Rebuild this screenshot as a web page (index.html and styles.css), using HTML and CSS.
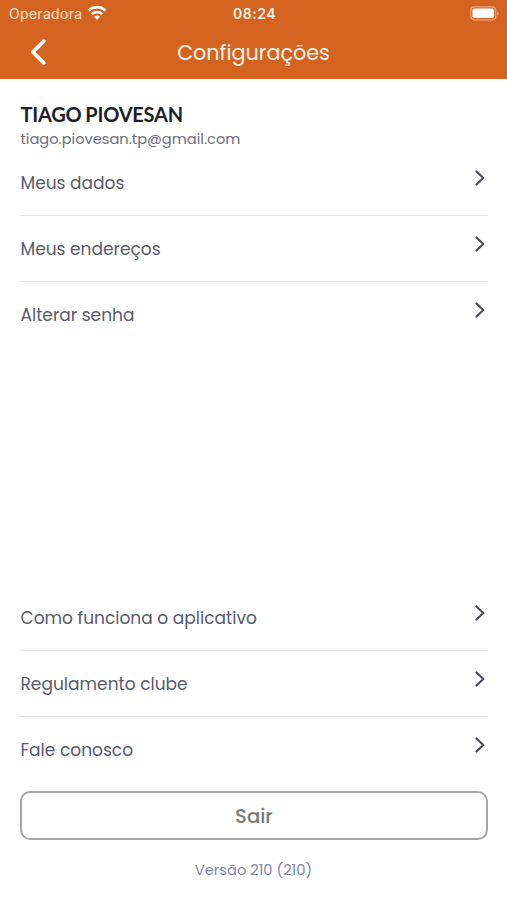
FILE: index.html
```html
<!DOCTYPE html>
<html lang="pt-BR">
<head>
    <meta charset="UTF-8">
    <meta name="viewport" content="width=device-width, initial-scale=1.0">
    <title>Configurações</title>
    <link rel="stylesheet" href="styles.css">
</head>
<body>
    <header class="header">
        <div class="status-bar">
            <div class="carrier">
                <span>Operadora</span>
                <svg class="wifi" width="20" height="15" viewBox="0 0 20 15" fill="none" stroke="#fff" stroke-width="2.6">
                    <path d="M1.6 5.6a12 12 0 0 1 16.8 0"/>
                    <path d="M4.8 9.1a7.4 7.4 0 0 1 10.4 0"/>
                    <path d="M10 14.8L7 11.8a4.2 4.2 0 0 1 6 0z" fill="#fff" stroke="none"/>
                </svg>
            </div>
            <span class="time">08:24</span>
            <svg class="battery" width="30" height="15" viewBox="0 0 30 15">
                <rect x="0.8" y="0.8" width="25" height="13" rx="3.5" fill="none" stroke="#e9a57a" stroke-width="1.2"/>
                <rect x="2.5" y="2.5" width="21.6" height="9.6" rx="1.8" fill="#fff"/>
                <path d="M27.2 5.2v4.4a2.4 2.4 0 0 0 0-4.4z" fill="#e9a57a"/>
            </svg>
        </div>
        <div class="nav-bar">
            <svg class="back" width="18" height="28" viewBox="0 0 18 28" fill="none" stroke="#fff" stroke-width="3.8" stroke-linecap="round" stroke-linejoin="round">
                <path d="M14.8 3.2L3.8 14l11 10.8"/>
            </svg>
            <h1 class="title">Configurações</h1>
        </div>
    </header>

    <main class="content">
        <div class="user">
            <h2 class="user-name">TIAGO PIOVESAN</h2>
            <p class="user-email">tiago.piovesan.tp@gmail.com</p>
        </div>
        <ul class="menu">
            <li class="menu-item"><span class="label">Meus dados</span>
                <svg class="chevron" viewBox="0 0 10 16"><path d="M1.5 1.5L8.3 8l-6.8 6.5"/></svg></li>
            <li class="menu-item"><span class="label">Meus endereços</span>
                <svg class="chevron" viewBox="0 0 10 16"><path d="M1.5 1.5L8.3 8l-6.8 6.5"/></svg></li>
            <li class="menu-item"><span class="label">Alterar senha</span>
                <svg class="chevron" viewBox="0 0 10 16"><path d="M1.5 1.5L8.3 8l-6.8 6.5"/></svg></li>
        </ul>
        <ul class="menu menu-bottom">
            <li class="menu-item"><span class="label">Como funciona o aplicativo</span>
                <svg class="chevron" viewBox="0 0 10 16"><path d="M1.5 1.5L8.3 8l-6.8 6.5"/></svg></li>
            <li class="menu-item"><span class="label">Regulamento clube</span>
                <svg class="chevron" viewBox="0 0 10 16"><path d="M1.5 1.5L8.3 8l-6.8 6.5"/></svg></li>
            <li class="menu-item"><span class="label">Fale conosco</span>
                <svg class="chevron" viewBox="0 0 10 16"><path d="M1.5 1.5L8.3 8l-6.8 6.5"/></svg></li>
        </ul>
        <button class="logout">Sair</button>
        <p class="version">Versão 210 (210)</p>
    </main>
</body>
</html>
```
FILE: styles.css
```css
* {
    box-sizing: border-box;
}
body {
    margin: 0;
    height: 100vh;
    display: flex;
    flex-direction: column;
    font-family: Poppins, Inter, sans-serif;
    background-color: #fff;
    color: #585b6a;
}
.header {
    height: 79px;
    background-color: #d4631f;
    color: #fff3e8;
}
.status-bar {
    display: grid;
    grid-template-columns: 1fr auto 1fr;
    align-items: center;
    height: 27px;
    padding: 0 7px 0 9px;
    font-family: Inter, sans-serif;
    font-size: 14px;
}
.carrier {
    display: flex;
    align-items: center;
    gap: 5px;
    letter-spacing: 0.3px;
    color: #fde4d0;
}
.wifi {
    margin-top: -2px;
}
.time {
    font-weight: 600;
    letter-spacing: 0.5px;
}
.battery {
    justify-self: end;
}
.nav-bar {
    display: grid;
    grid-template-columns: 1fr auto 1fr;
    align-items: center;
    height: 50px;
    padding: 0 29px;
}
.title {
    margin: 0;
    font-size: 20.7px;
    font-weight: 400;
}
.content {
    flex: 1;
    display: flex;
    flex-direction: column;
    padding: 23px 19px 0 20px;
}
.user {
    height: 48px;
    padding-left: 0.5px;
}
.user-name {
    margin: 0;
    font-family: Lato, sans-serif;
    font-size: 20px;
    font-weight: 700;
    line-height: 24px;
    letter-spacing: -0.2px;
    word-spacing: -1px;
    color: #1c1e29;
}
.user-email {
    margin: 3px 0 0;
    font-size: 14.65px;
    line-height: 20px;
    color: #6a6d7b;
}
.menu {
    margin: 0;
    padding: 0;
    list-style: none;
}
.menu-item {
    display: flex;
    justify-content: space-between;
    align-items: flex-start;
    height: 66px;
    padding: 20px 3px 0 0.5px;
    border-bottom: 1px solid #e6e8eb;
}
.menu-item:last-child {
    border-bottom: none;
}
.label {
    font-size: 17.05px;
    line-height: 26px;
}
.chevron {
    width: 10px;
    height: 16px;
    fill: none;
    stroke: #4b4d5c;
    stroke-width: 2.2;
    stroke-linecap: round;
    stroke-linejoin: round;
}
.menu-bottom {
    margin-top: auto;
}
.logout {
    flex: none;
    height: 49px;
    margin-top: 8px;
    background-color: #fff;
    border: 2px solid #a6a6a6;
    border-radius: 10px;
    font-family: inherit;
    font-size: 19.6px;
    font-weight: 500;
    color: #7a7a7a;
}
.version {
    height: 60px;
    margin: 0;
    padding-right: 1px;
    line-height: 60px;
    text-align: center;
    font-size: 14.7px;
    color: #83879a;
}
```
